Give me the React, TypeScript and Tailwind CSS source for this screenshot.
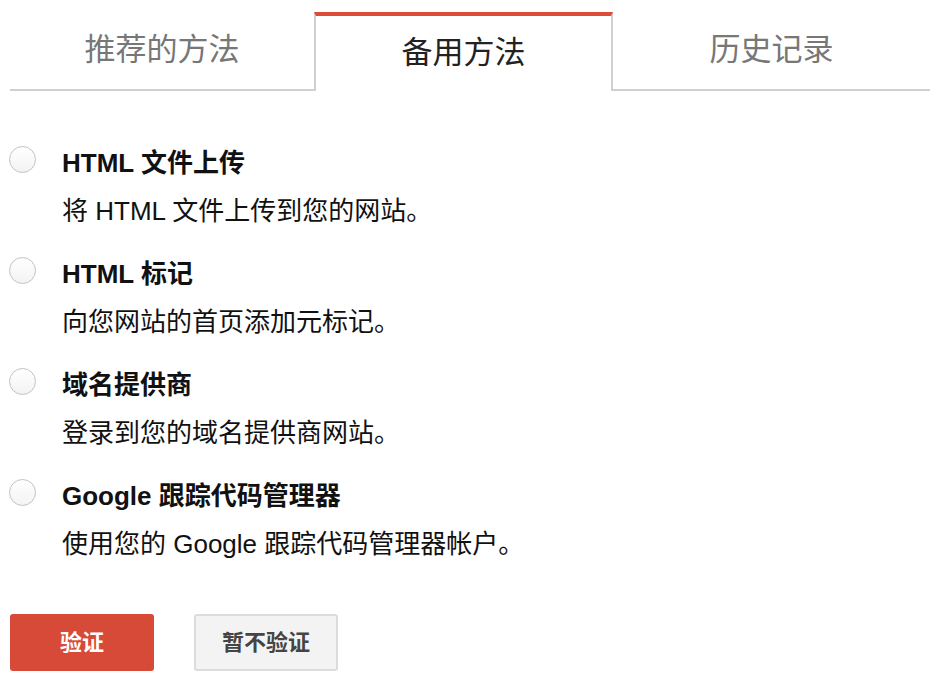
const font = { fontFamily: '"Liberation Sans", "Noto Sans CJK SC", sans-serif' };

const methods = [
  { title: "HTML 文件上传", desc: "将 HTML 文件上传到您的网站。" },
  { title: "HTML 标记", desc: "向您网站的首页添加元标记。" },
  { title: "域名提供商", desc: "登录到您的域名提供商网站。" },
  { title: "Google 跟踪代码管理器", desc: "使用您的 Google 跟踪代码管理器帐户。" },
];

export default function App() {
  return (
    <div className="w-[930px] h-[696px] bg-white overflow-hidden" style={font}>
      <div className="flex pl-[10px] pt-[12px]">
        <div className="w-[304px] h-[79px] border-b-2 border-[#d0d0d0] flex items-center justify-center text-[31px] text-[#777]">
          推荐的方法
        </div>
        <div className="w-[299px] h-[79px] border-t-4 border-t-[#dd4b39] border-x-2 border-x-[#d0d0d0] flex items-center justify-center text-[31px] text-[#222]">
          备用方法
        </div>
        <div className="flex-1 h-[79px] border-b-2 border-[#d0d0d0] flex items-center justify-center text-[31px] text-[#777]">
          历史记录
        </div>
      </div>

      <div className="pl-[9px] pt-[56px] flex flex-col gap-[31px]">
        {methods.map((m) => (
          <div key={m.title} className="flex">
            <div className="w-[27px] h-[27px] -mt-[1px] rounded-full border-[1.5px] border-[#c2c2c2] bg-gradient-to-b from-white to-[#f3f3f3]" />
            <div className="ml-[26px]">
              <div className="text-[26px] font-bold text-[#111] leading-[32px]">{m.title}</div>
              <div className="text-[26px] text-[#111] leading-[32px] mt-[16px]">{m.desc}</div>
            </div>
          </div>
        ))}
      </div>

      <div className="flex pl-[10px] mt-[54px] gap-[40px]">
        <button className="w-[144px] h-[57px] rounded-[3px] bg-[#d84a38] text-white text-[22px] font-bold">
          验证
        </button>
        <button className="w-[144px] h-[57px] rounded-[3px] bg-[#f3f3f3] border-2 border-[#dcdcdc] text-[#444] text-[22px] font-bold">
          暂不验证
        </button>
      </div>
    </div>
  );
}
